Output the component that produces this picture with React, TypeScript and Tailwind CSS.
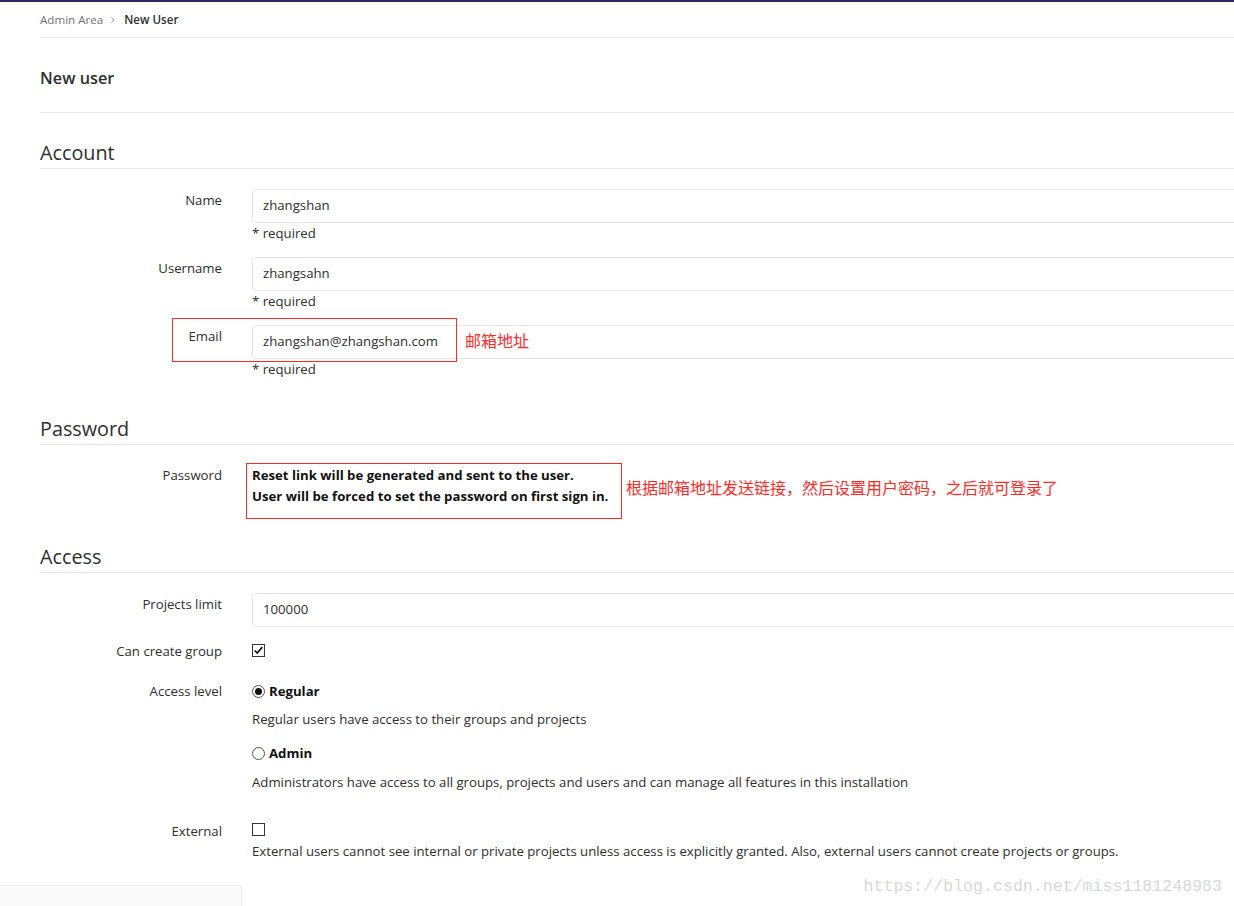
import React from 'react';

// Small custom controls so they look like the classic browser ones in the screenshot
function CheckBox({ checked }: { checked?: boolean }) {
  return (
    <span className="inline-flex w-[13px] h-[13px] border border-[#333333] bg-white items-center justify-center">
      {checked && (
        <svg viewBox="0 0 13 13" className="w-[11px] h-[11px]">
          <path d="M2 6.5 L5 9.5 L11 2.5" fill="none" stroke="#111111" strokeWidth="2" />
        </svg>
      )}
    </span>
  );
}

function Radio({ checked }: { checked?: boolean }) {
  return (
    <span className="inline-flex w-[13px] h-[13px] rounded-full border border-[#555555] bg-white items-center justify-center">
      {checked && <span className="w-[7px] h-[7px] rounded-full bg-[#111111]" />}
    </span>
  );
}

function Legend({ title, className }: { title: string; className: string }) {
  return (
    <div className={`text-[19.8px] leading-[22px] pb-[4px] border-b border-[#e5e5e5] ${className}`}>
      {title}
    </div>
  );
}

function TextRow({ label, value, required, className = '' }: { label: string; value: string; required?: boolean; className?: string }) {
  return (
    <div className={`grid grid-cols-[182px_1fr] gap-x-[30px] ${className}`}>
      <label className="text-right pt-px leading-[20px]">{label}</label>
      <div>
        <div className="h-[34px] border border-[#e5e5e5] rounded-[3px] px-[10px] flex items-center bg-white">{value}</div>
        {required && <div className="leading-[20px] mt-0">* required</div>}
      </div>
    </div>
  );
}

export default function App() {
  return (
    <div className="relative w-[1234px] h-[906px] overflow-hidden bg-white text-[#2e2e2e] text-[13.2px] font-['Open_Sans',sans-serif]">
      <div className="h-[2px] bg-[#2b2a5c]" />

      <div className="pl-10 w-[1320px]">
        {/* Breadcrumb */}
        <div className="h-[36px] flex items-center text-[11.6px] border-b border-[#e5e5e5]">
          <span className="text-[#707070]">Admin Area</span>
          <svg viewBox="0 0 8 8" className="w-[8px] h-[8px] mx-[6px] text-[#909090]">
            <path d="M2.5 1.5 L5 4 L2.5 6.5" fill="none" stroke="currentColor" strokeWidth="1" />
          </svg>
          <span className="font-semibold text-[#2e2e2e] ml-[1px]">New User</span>
        </div>

        {/* Page title */}
        <div className="h-[75px] pt-[28px] border-b border-[#e5e5e5]">
          <h3 className="text-[16.3px] leading-[24px] font-semibold">New user</h3>
        </div>

        {/* Account */}
        <Legend title="Account" className="mt-[29px]" />
        <div className="mt-5">
          <TextRow label="Name" value="zhangshan" required className="mb-[14px]" />
          <TextRow label="Username" value="zhangsahn" required className="mb-[14px]" />
          <div className="relative">
            <TextRow label="Email" value="zhangshan@zhangshan.com" required />
            {/* red annotation */}
            <div className="absolute left-[132px] top-[-7px] w-[285px] h-[44px] border border-[#ff2a2a]" />
            <div className="absolute left-[425px] top-[4px] text-[16px] leading-[22px] text-[#ff2a2a] font-['Noto_Sans_CJK_SC',sans-serif]">邮箱地址</div>
          </div>
        </div>

        {/* Password */}
        <Legend title="Password" className="mt-[39px]" />
        <div className="mt-5 grid grid-cols-[182px_1fr] gap-x-[30px]">
          <label className="text-right leading-[20px]">Password</label>
          <div className="relative font-bold text-[#111111] leading-[21px]">
            <div>Reset link will be generated and sent to the user.</div>
            <div>User will be forced to set the password on first sign in.</div>
            <div className="absolute left-[-6px] top-[-2px] w-[376px] h-[56px] border border-[#ff2a2a]" />
            <div className="absolute left-[374px] top-[11px] text-[16px] leading-[22px] font-normal text-[#ff2a2a] whitespace-nowrap font-['Noto_Sans_CJK_SC',sans-serif]">
              根据邮箱地址发送链接，然后设置用户密码，之后就可登录了
            </div>
          </div>
        </div>

        {/* Access */}
        <Legend title="Access" className="mt-[39px]" />
        <div className="mt-5">
          <TextRow label="Projects limit" value="100000" />

          <div className="grid grid-cols-[182px_1fr] gap-x-[30px] mt-[14px]">
            <label className="text-right leading-[20px]">Can create group</label>
            <div className="pt-[3px] leading-none">
              <CheckBox checked />
            </div>
          </div>

          <div className="grid grid-cols-[182px_1fr] gap-x-[30px] mt-[20px]">
            <label className="text-right leading-[20px]">Access level</label>
            <div>
              <div className="flex items-center gap-[4px] leading-[20px]">
                <Radio checked />
                <span className="font-bold text-[#111111]">Regular</span>
              </div>
              <div className="mt-[8px] leading-[20px]">Regular users have access to their groups and projects</div>
              <div className="mt-[14px] flex items-center gap-[4px] leading-[20px]">
                <Radio />
                <span className="font-bold text-[#111111]">Admin</span>
              </div>
              <div className="mt-[9px] leading-[20px]">
                Administrators have access to all groups, projects and users and can manage all features in this installation
              </div>
            </div>
          </div>

          <div className="grid grid-cols-[182px_1fr] gap-x-[30px] mt-[29px]">
            <label className="text-right leading-[20px]">External</label>
            <div>
              <div className="pt-[2px] h-[20px] leading-none">
                <CheckBox />
              </div>
              <div className="leading-[20px]">
                External users cannot see internal or private projects unless access is explicitly granted. Also, external users cannot create projects or groups.
              </div>
            </div>
          </div>
        </div>
      </div>

      {/* bottom-left sidebar stub */}
      <div className="absolute left-0 bottom-0 w-[242px] h-[21px] bg-[#fafafa] border-t border-r border-[#efefef] rounded-tr-[3px]" />

      {/* watermark */}
      <div className="absolute right-[12px] top-[876px] text-[16.6px] leading-[22px] text-[#d8d8d8] font-['Liberation_Mono',monospace]">
        https://blog.csdn.net/miss1181248983
      </div>
    </div>
  );
}
